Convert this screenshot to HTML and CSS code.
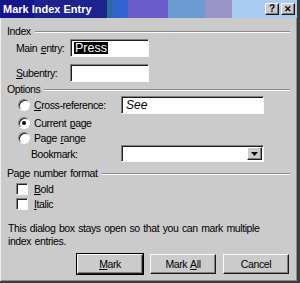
FILE: index.html
```html
<!DOCTYPE html>
<html>
<head>
<meta charset="utf-8">
<link rel="stylesheet" href="styles.css">
</head>
<body>
<div class="window">
  <div class="titlebar">
    <span class="title">Mark Index Entry</span>
    <div class="tbtns">
      <span class="tbtn">?</span>
      <span class="tbtn x">✕</span>
    </div>
  </div>
  <div class="content">
    <div class="ghead hd1"><span>Index</span><i class="etch"></i></div>
    <div class="row r-main">
      <span class="lbl">Main <u>e</u>ntry:</span>
      <span class="edit e-short"><span class="sel">Press</span></span>
    </div>
    <div class="row r-sub">
      <span class="lbl"><u>S</u>ubentry:</span>
      <span class="edit e-short"></span>
    </div>
    <div class="ghead hd2"><span>Options</span><i class="etch"></i></div>
    <div class="row r-cross">
      <span class="opt"><span class="radio"></span><span><u>C</u>ross-reference:</span></span>
      <span class="edit e-long"><span class="see">See</span></span>
    </div>
    <div class="row r-cur">
      <span class="opt"><span class="radio on"></span><span>Current <u>p</u>age</span></span>
    </div>
    <div class="row r-range">
      <span class="opt"><span class="radio"></span><span>Page <u>r</u>ange</span></span>
    </div>
    <div class="row r-book">
      <span class="lbl2">Bookmark:</span>
      <span class="edit e-long combo"><span class="ddbtn"><svg width="7" height="4" viewBox="0 0 7 4"><path d="M0 0h7L3.5 4z" fill="#000"/></svg></span></span>
    </div>
    <div class="ghead hd3"><span>Page number format</span><i class="etch"></i></div>
    <div class="row r-bold">
      <span class="opt"><span class="check"></span><span><u>B</u>old</span></span>
    </div>
    <div class="row r-ital">
      <span class="opt"><span class="check"></span><span><u>I</u>talic</span></span>
    </div>
    <p class="note">This dialog box stays open so that you can mark multiple index entries.</p>
    <div class="buttons">
      <span class="btn def"><span><u>M</u>ark</span></span>
      <span class="btn"><span>Mark <u>A</u>ll</span></span>
      <span class="btn"><span>Cancel</span></span>
    </div>
  </div>
</div>
</body>
</html>
```

FILE: styles.css
```css
html, body { margin: 0; padding: 0; background: #2a2a2a; }
body { font-family: "Liberation Sans", Arial, sans-serif; font-size: 10.5px; letter-spacing: -0.4px; word-spacing: 1px; color: #000; }
u { text-decoration: underline; text-underline-offset: 1px; }

.window {
  width: 300px; height: 283px; box-sizing: border-box;
  background: #cbcbcb;
  border-right: 3px solid #3c3c3c;
  border-bottom: 2px solid #3c3c3c;
  box-shadow: inset 1px 0 0 #efefef, inset -1px -1px 0 #8a8a8a;
  display: flex; flex-direction: column;
}

.titlebar {
  height: 18px; flex: none;
  display: flex; align-items: center; justify-content: space-between;
  padding: 0 2px 0 3px;
  background: linear-gradient(90deg,
    #14158a 0, #14158a 34px,
    #1d238e 34px, #1d238e 107px,
    #2b6c9e 107px, #2b6c9e 113px,
    #3262d2 113px, #3262d2 128px,
    #6a5cc9 128px, #6a5cc9 168px,
    #6a9bd2 168px, #6a9bd2 205px,
    #9a94c9 205px, #9a94c9 232px,
    #aacbf2 232px);
}
.title { color: #fff; font-weight: bold; font-size: 11px; letter-spacing: 0; word-spacing: 0; }
.tbtns { display: flex; gap: 2px; }
.tbtn {
  width: 14px; height: 12px; box-sizing: border-box;
  background: #cbcbcb;
  border: 1px solid; border-color: #fff #1a1a1a #1a1a1a #fff;
  box-shadow: inset -1px -1px 0 #808080;
  display: flex; align-items: center; justify-content: center;
  font-size: 10px; font-weight: bold; line-height: 1; letter-spacing: 0;
}
.tbtn.x { font-size: 9px; }

.content { flex: 1; padding: 7px 7px 0 7px; display: flex; flex-direction: column; }

.ghead { display: flex; align-items: center; height: 13px; white-space: nowrap; }
.ghead span { line-height: 13px; }
.etch { flex: 1; height: 0; border-top: 1px solid #8a8a8a; border-bottom: 1px solid #fafafa; margin-left: 4px; }
.hd2 { margin-top: 1px; }
.hd3 { margin-top: 5px; }

.row { display: flex; align-items: center; white-space: nowrap; }
.lbl { width: 54px; padding-left: 9px; flex: none; }
.lbl2 { width: 90px; padding-left: 24px; flex: none; }
.r-main { height: 18px; margin-top: 1px; }
.r-sub { height: 18px; margin-top: 7px; }
.r-cross { height: 18px; margin-top: 0; }
.r-cur, .r-range, .r-bold, .r-ital { height: 15px; }
.r-cur { margin-top: 1px; }
.r-book { height: 17px; margin-top: 0; }
.r-bold { margin-top: 1px; }

.opt { display: flex; align-items: center; width: 103px; padding-left: 11px; flex: none; }
.opt > span:last-child { margin-left: 4px; }

.edit {
  height: 18px; box-sizing: border-box; background: #fff; flex: none;
  border: 1px solid; border-color: #808080 #fafafa #fafafa #808080;
  box-shadow: inset 1px 1px 0 #1e1e1e;
  display: flex; align-items: center; padding-left: 2px;
}
.e-short { width: 79px; }
.e-long { width: 143px; }
.combo { height: 17px; justify-content: flex-end; padding: 0 1px 0 0; }
.sel { background: #000; color: #fff; font-size: 12.5px; letter-spacing: 0; line-height: 12px; padding: 0 1px; margin-left: 1px; }
.see { font-style: italic; font-size: 12px; letter-spacing: 0; margin-left: 2px; }
.ddbtn {
  width: 15px; height: 13px; box-sizing: border-box; background: #cbcbcb;
  border: 1px solid; border-color: #fff #1a1a1a #1a1a1a #fff;
  box-shadow: inset -1px -1px 0 #808080;
  display: flex; align-items: center; justify-content: center;
}

.radio {
  width: 12px; height: 12px; box-sizing: border-box; border-radius: 50%;
  background: #fff; position: relative; flex: none;
  border: 1px solid; border-color: #808080 #fafafa #fafafa #808080;
  box-shadow: inset 1px 1px 0 #1e1e1e;
}
.radio.on::after {
  content: ""; position: absolute; left: 3px; top: 3px; width: 4px; height: 4px;
  border-radius: 50%; background: #000;
}
.check {
  width: 12px; height: 12px; box-sizing: border-box; background: #fff; flex: none;
  border: 1px solid; border-color: #808080 #fafafa #fafafa #808080;
  box-shadow: inset 1px 1px 0 #1e1e1e;
  margin-left: -2px; margin-right: 2px;
}

.note { margin: 11px 0 0 1px; line-height: 13px; width: 268px; }

.buttons { display: flex; justify-content: flex-end; gap: 7px; margin-top: 6px; padding-right: 1px; }
.btn {
  width: 66px; height: 20px; box-sizing: border-box;
  border: 1px solid; border-color: #fafafa #1a1a1a #1a1a1a #fafafa;
  box-shadow: inset -1px -1px 0 #808080;
  display: flex; align-items: center; justify-content: center;
}
.btn.def { outline: 1px solid #000; }
```
